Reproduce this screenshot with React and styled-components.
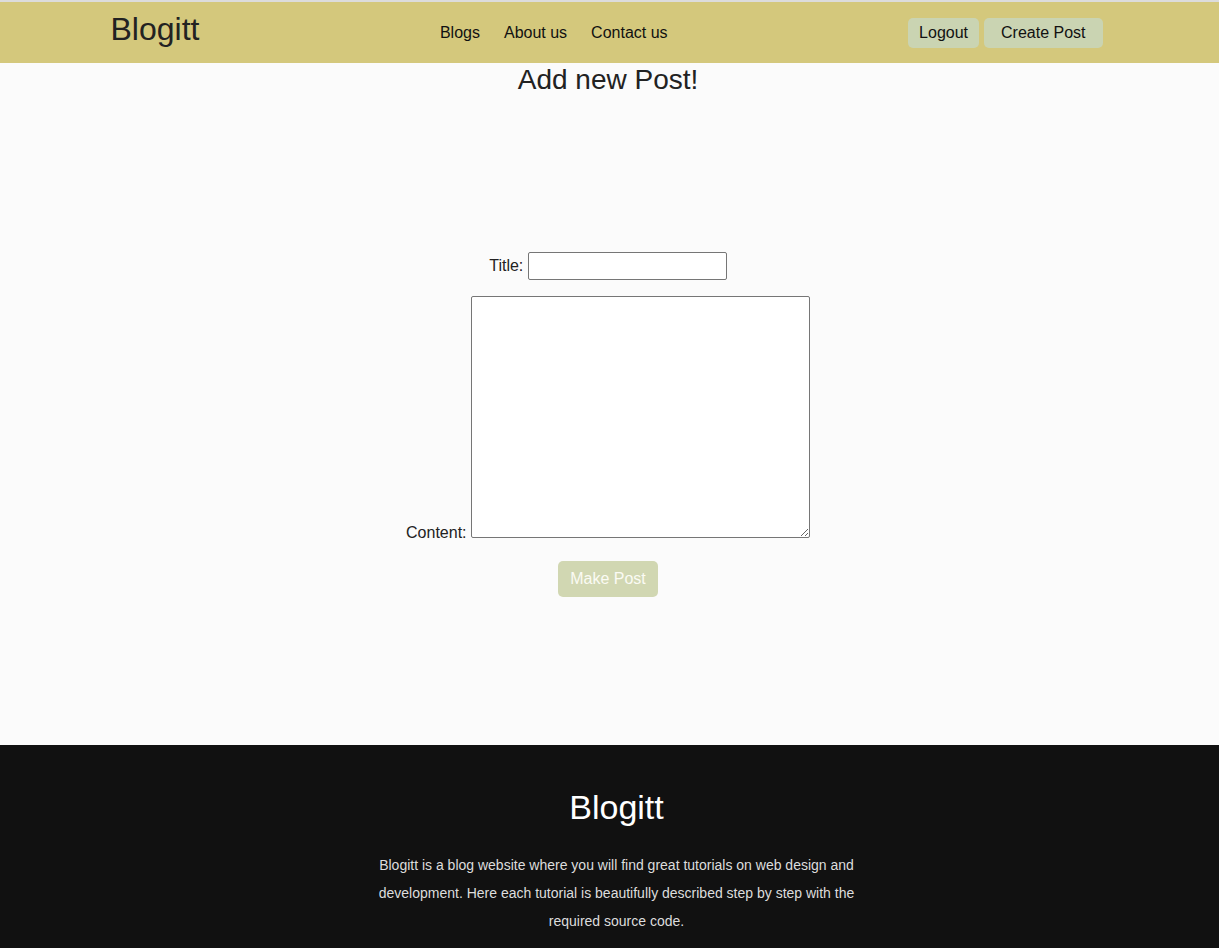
import React from "react";
import styled, { createGlobalStyle } from "styled-components";

const GlobalStyle = createGlobalStyle`
  * {
    box-sizing: border-box;
  }
  body {
    margin: 0;
    background-color: #fbfbfb;
    font-family: "Liberation Sans", Arial, sans-serif;
    color: #212529;
  }
`;

const App = () => {
  return (
    <>
      <GlobalStyle />
      <Navbar>
        <div className="nav-container">
          <Logo>Blogitt</Logo>
          <NavLinks>
            <a href="#blogs">Blogs</a>
            <a href="#about">About us</a>
            <a href="#contact">Contact us</a>
          </NavLinks>
          <NavActions>
            <NavButton>Logout</NavButton>
            <NavButton wide>Create Post</NavButton>
          </NavActions>
        </div>
      </Navbar>

      <Main>
        <h2>Add new Post!</h2>
        <PostForm onSubmit={(e) => e.preventDefault()}>
          <FormRow className="title-row">
            <label htmlFor="title">Title:</label>{" "}
            <TitleInput id="title" type="text" />
          </FormRow>
          <FormRow>
            <label htmlFor="content">Content:</label>{" "}
            <ContentArea id="content" />
          </FormRow>
          <SubmitButton type="submit">Make Post</SubmitButton>
        </PostForm>
      </Main>

      <Footer>
        <h2>Blogitt</h2>
        <p>
          Blogitt is a blog website where you will find great tutorials on web
          design and development. Here each tutorial is beautifully described
          step by step with the required source code.
        </p>
      </Footer>
    </>
  );
};

export default App;

const Navbar = styled.nav`
  border-top: 2px solid #dcdcdc;
  background-color: #d4c87c;
  height: 63px;
  .nav-container {
    width: 1000px;
    height: 100%;
    margin: 0 auto;
    display: flex;
    align-items: center;
    justify-content: space-between;
  }
`;

const Logo = styled.div`
  font-size: 32px;
  color: #222;
  margin-left: 1px;
  padding-bottom: 6px;
`;

const NavLinks = styled.div`
  display: flex;
  a {
    color: #111;
    text-decoration: none;
    font-size: 16px;
    padding: 0 12px;
  }
`;

const NavActions = styled.div`
  display: flex;
  gap: 5px;
  margin-right: 7px;
`;

const NavButton = styled.button`
  height: 30px;
  padding: 0 ${(p) => (p.wide ? "17px" : "11px")};
  border: none;
  border-radius: 5px;
  background-color: #cad4b2;
  color: #111;
  font-family: "Liberation Sans", Arial, sans-serif;
  font-size: 16px;
  cursor: pointer;
`;

const Main = styled.main`
  min-height: 681px;
  padding-right: 3px;
  h2 {
    margin: 1px 0 0;
    text-align: center;
    font-size: 28px;
    font-weight: 400;
    color: #222;
  }
`;

const PostForm = styled.form`
  padding-top: 156px;
  display: flex;
  flex-direction: column;
  align-items: center;
`;

const FormRow = styled.div`
  text-align: center;
  font-size: 16px;
  color: #222;
  &.title-row {
    margin-bottom: 16px;
  }
`;

const TitleInput = styled.input`
  width: 199px;
  height: 28px;
  border: 1px solid #767676;
  border-radius: 2px;
  background: #fff;
  font-size: 16px;
`;

const ContentArea = styled.textarea`
  width: 339px;
  height: 242px;
  border: 1px solid #767676;
  border-radius: 2px;
  background: #fff;
`;

const SubmitButton = styled.button`
  margin-top: 19px;
  width: 100px;
  height: 36px;
  border: none;
  border-radius: 5px;
  background-color: #d1d7b2;
  color: #fbfbf4;
  font-family: "Liberation Sans", Arial, sans-serif;
  font-size: 16px;
`;

const Footer = styled.footer`
  background-color: #111;
  padding: 43px 0 20px 14px;
  display: flex;
  flex-direction: column;
  align-items: center;
  h2 {
    margin: 0 0 24px;
    font-size: 34px;
    font-weight: 400;
    color: #fff;
  }
  p {
    margin: 0;
    width: 500px;
    text-align: center;
    font-size: 14px;
    line-height: 28px;
    color: #ddd;
  }
`;
